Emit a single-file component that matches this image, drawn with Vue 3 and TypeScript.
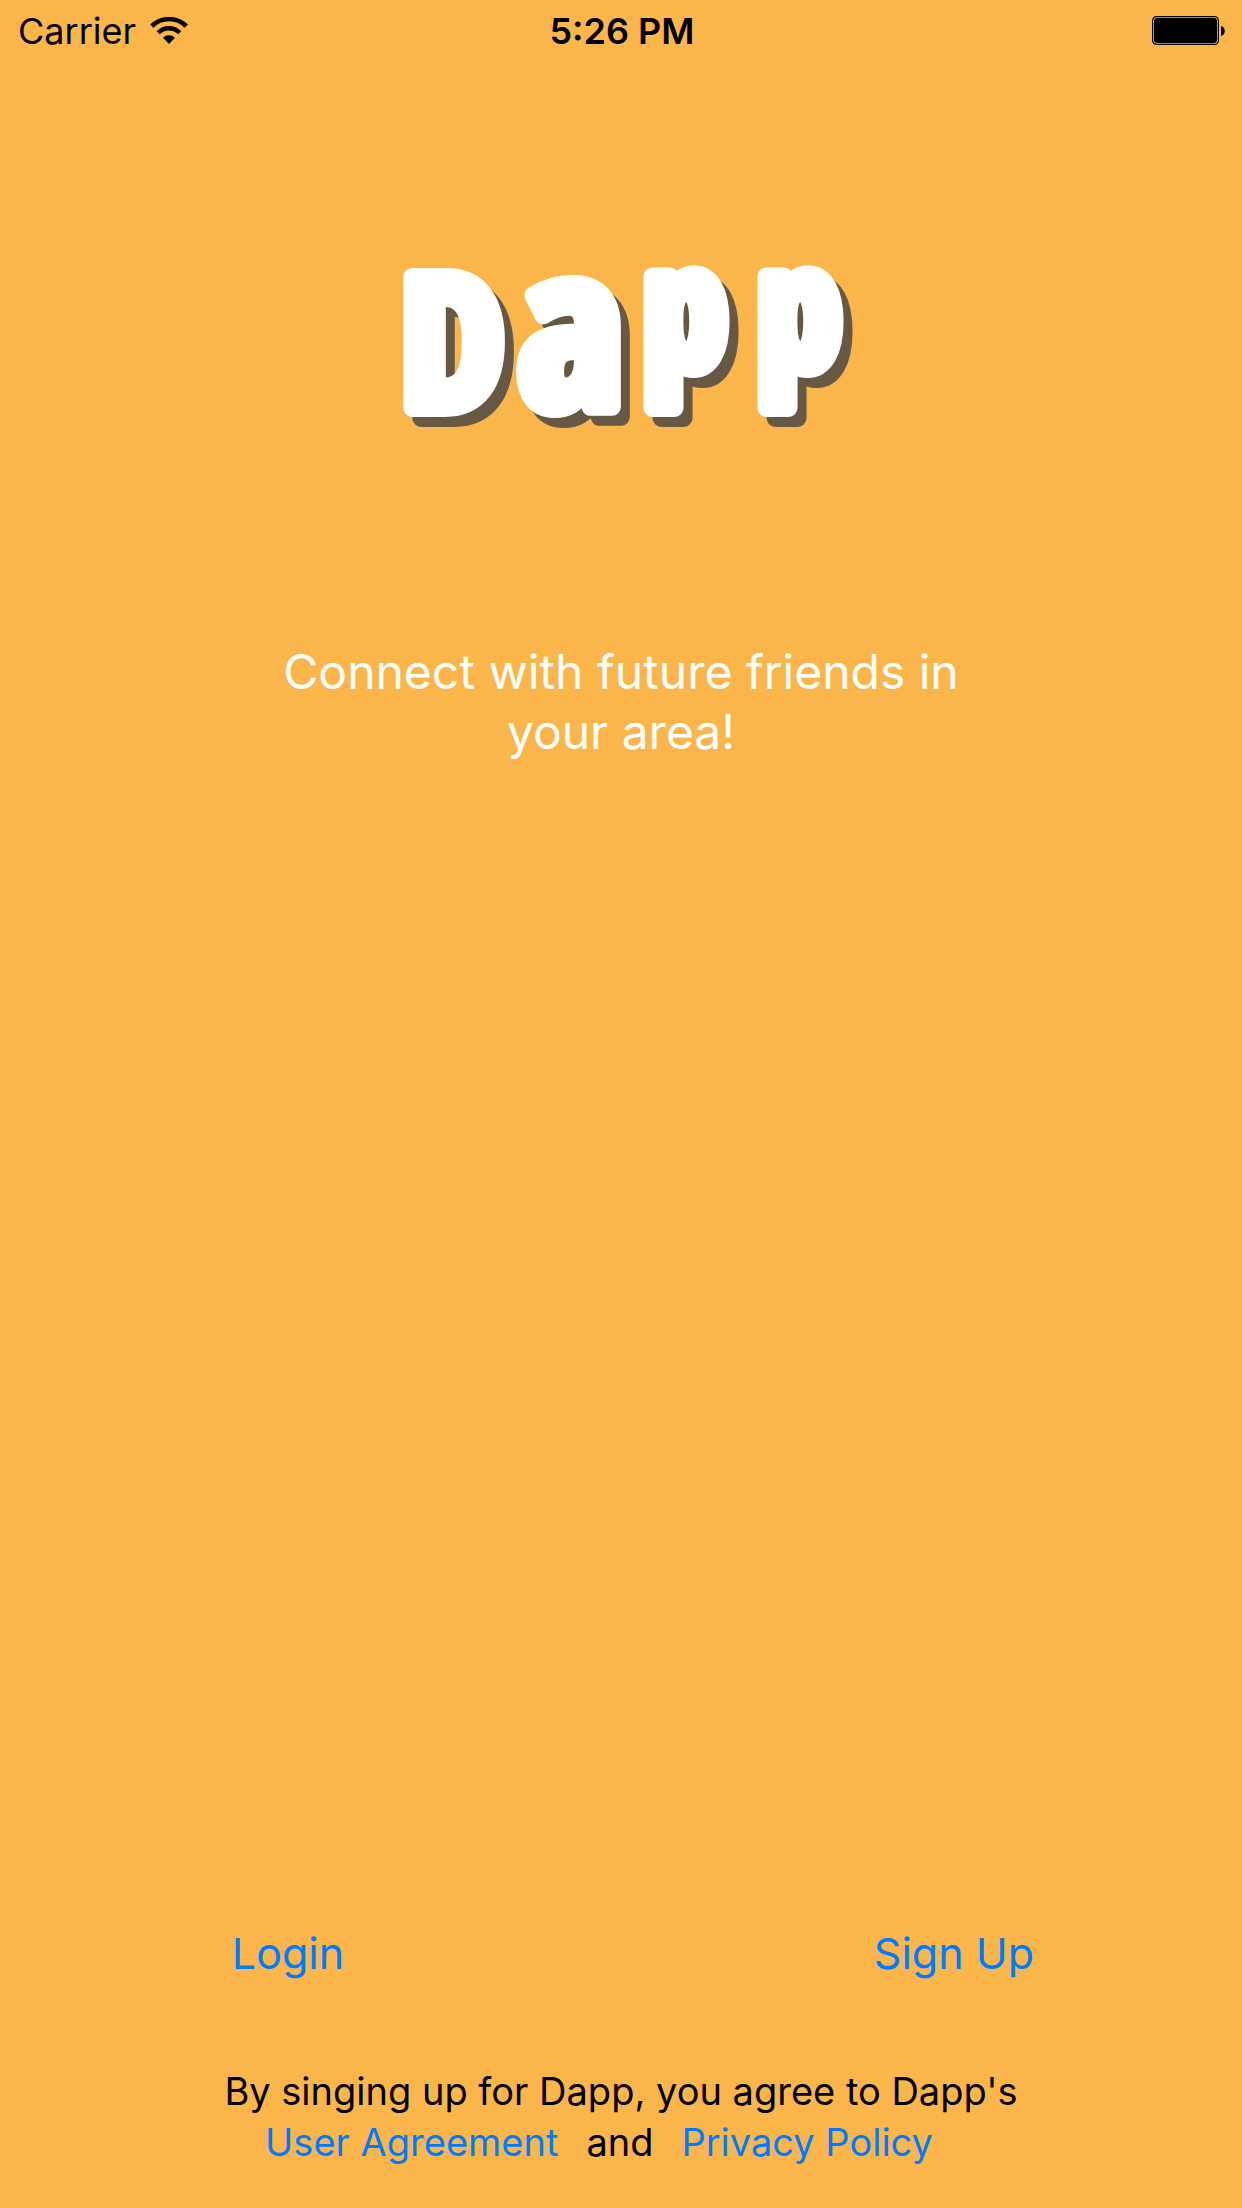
<script setup lang="ts">
interface LogoLetter {
  char: string
  size: number
  stroke: number
  x: number
  y: number
}

// The stems of both p's stand on the same line as the D.
const letters: LogoLetter[] = [
  { char: 'D', size: 184, stroke: 18, x: 44, y: 146 },
  { char: 'a', size: 222, stroke: 18, x: 163, y: 145 },
  { char: 'p', size: 168, stroke: 18, x: 277, y: 106 },
  { char: 'p', size: 168, stroke: 18, x: 391, y: 106 },
]
</script>

<template>
  <div class="screen">
    <header class="status">
      <div class="carrier">
        <span>Carrier</span>
        <svg class="wifi" viewBox="0 0 38 28" aria-hidden="true">
          <path d="M1.8 9.2a24.3 24.3 0 0 1 34.4 0" fill="none" stroke="#000" stroke-width="4.6" />
          <path d="M8.2 15.8a15.2 15.2 0 0 1 21.6 0" fill="none" stroke="#000" stroke-width="4.4" />
          <path d="M13 20.8a8.5 8.5 0 0 1 12 0L19 27z" fill="#000" />
        </svg>
      </div>
      <time class="clock">5:26 PM</time>
      <svg class="battery" viewBox="0 0 74 30" aria-hidden="true">
        <rect x="0.6" y="0.6" width="65.8" height="27.8" rx="4" fill="none" stroke="#000" stroke-width="1.2" />
        <rect x="2" y="2" width="63" height="25" rx="3" fill="#000" />
        <path d="M69 10c5 1 5 9 0 10z" fill="#000" />
      </svg>
    </header>

    <main class="intro">
      <h1 class="brand">
        <svg class="logo" viewBox="0 0 446 170" role="img" aria-label="Dapp">
          <text text-anchor="middle">
            <tspan
              v-for="(letter, i) in letters"
              :key="i"
              :x="letter.x"
              :y="letter.y"
              :font-size="letter.size"
              :stroke-width="letter.stroke"
            >{{ letter.char }}</tspan>
          </text>
        </svg>
      </h1>
      <p class="tagline">Connect with future friends in your area!</p>
    </main>

    <nav class="actions">
      <button type="button">Login</button>
      <button type="button">Sign Up</button>
    </nav>

    <footer class="legal">
      <p>By singing up for Dapp, you agree to Dapp's</p>
      <div class="links">
        <a href="#agreement">User Agreement</a>
        <span>and</span>
        <a href="#privacy">Privacy Policy</a>
      </div>
    </footer>
  </div>
</template>

<style>
body {
  margin: 0;
  background: #fbb64b;
}
</style>

<style scoped>
.screen {
  display: flex;
  flex-direction: column;
  box-sizing: border-box;
  min-height: 100vh;
  background: #fbb64b;
  color: #000;
  font-family: Inter, "Liberation Sans", sans-serif;
}

.status {
  display: grid;
  grid-template-columns: 1fr auto 1fr;
  align-items: center;
  height: 62px;
  padding: 0 16px 0 18px;
  font-size: 36px;
  line-height: 44px;
}

.carrier {
  display: flex;
  align-items: center;
  gap: 14px;
}

.wifi {
  width: 38px;
  height: 28px;
}

.clock {
  font-weight: 600;
}

.battery {
  justify-self: end;
  width: 74px;
  height: 30px;
}

.intro {
  display: flex;
  flex: 1;
  flex-direction: column;
  align-items: center;
  gap: 210px;
  padding-top: 200px;
}

.brand {
  margin: 0;
  padding-left: 20px;
}

.logo {
  display: block;
  width: 446px;
  height: 170px;
  overflow: visible;
  fill: #fff;
  stroke: #fff;
  stroke-linejoin: round;
  filter: drop-shadow(9px 10px 0 #675843);
  font-family: "Open Sans Condensed", "Roboto Condensed", "DejaVu Sans Mono", monospace;
  font-weight: 700;
}

.tagline {
  max-width: 720px;
  margin: 0;
  color: #fff;
  font-size: 48px;
  line-height: 60px;
  text-align: center;
}

.actions {
  display: flex;
  justify-content: space-between;
  padding: 0 208px;
}

.actions button {
  min-width: 160px;
  padding: 0;
  border: 0;
  background: none;
  color: #007aff;
  font: inherit;
  font-size: 43px;
  line-height: 54px;
  white-space: nowrap;
}

.legal {
  display: flex;
  flex-direction: column;
  align-items: center;
  padding: 86px 0 40px;
  font-size: 38px;
  line-height: 51px;
}

.legal p {
  margin: 0;
}

.links {
  display: flex;
  gap: 28px;
  padding-right: 44px;
}

.links a {
  color: #007aff;
  text-decoration: none;
}
</style>
